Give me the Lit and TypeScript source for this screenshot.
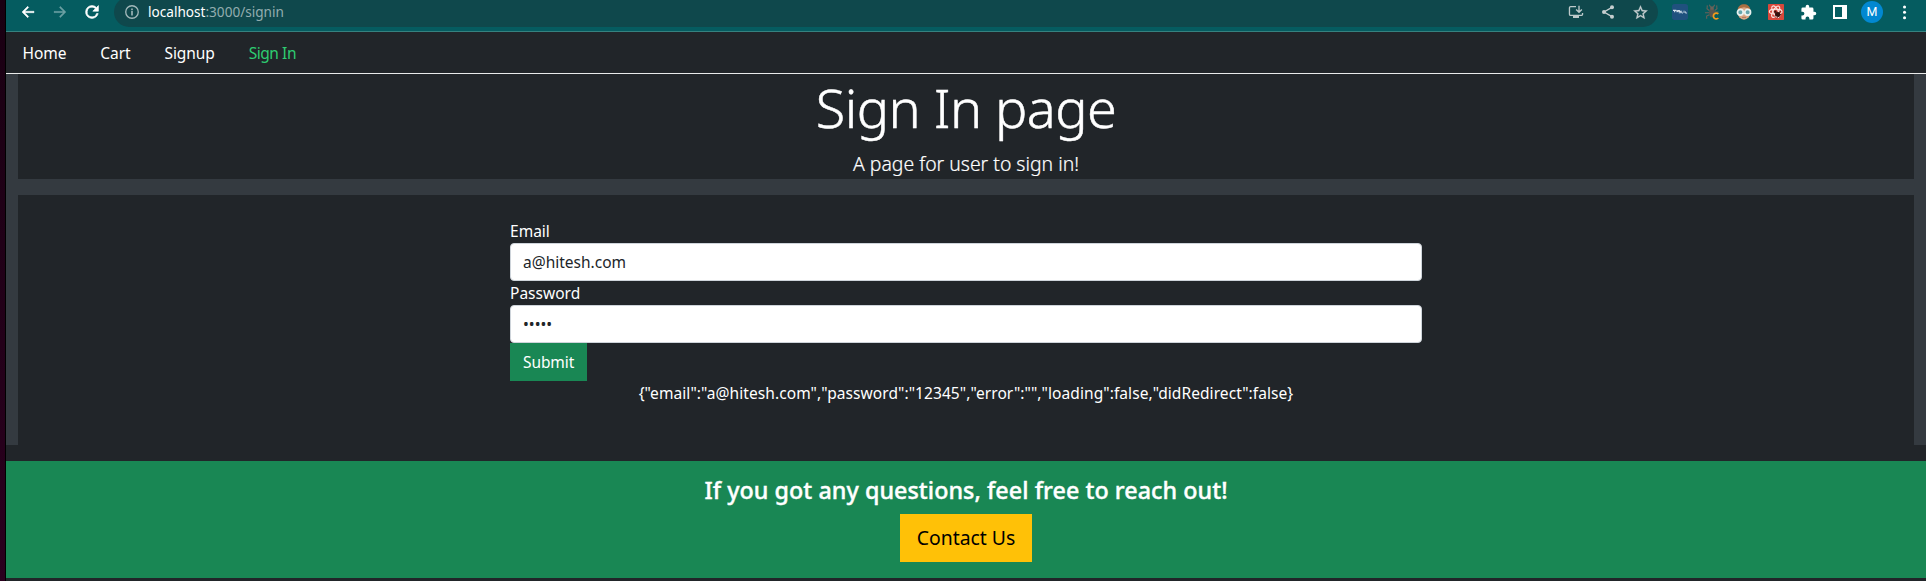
import { LitElement, html, css, svg } from "lit";
import { customElement, property, state } from "lit/decorators.js";
import { classMap } from "lit/directives/class-map.js";

const icons: Record<string, unknown> = {
  back: svg`<path fill="#fff" d="M21 10.900H7.300l5.700-5.700L11.500 3.500 3 12l8.500 8.500 1.500-1.700-5.700-5.700H21z" stroke="#fff" stroke-width=".7"/>`,
  forward: svg`<path fill="#6b9fa2" d="M3 10.900h13.700L11 5.200l1.500-1.700L21 12l-8.500 8.500-1.500-1.700 5.700-5.700H3z" stroke="#6b9fa2" stroke-width=".4"/>`,
  reload: svg`<path fill="#fff" stroke="#fff" stroke-width=".8" transform="translate(-2.400 -2.400) scale(1.200)" d="M17.650 6.350A7.960 7.960 0 0 0 12 4a8 8 0 1 0 7.730 10h-2.080A6 6 0 1 1 12 6c1.660 0 3.140.690 4.220 1.780L13 11h7V4z"/>`,
  info: svg`<circle cx="12" cy="12" r="9.400" fill="none" stroke="#a3b9bb" stroke-width="2"/><path fill="#a3b9bb" d="M10.800 10.600h2.400v6.600h-2.400zM10.800 6.800h2.400v2.400h-2.400z"/>`,
  install: svg`<path fill="none" stroke="#bdc9ca" stroke-width="2" d="M12 4H4a1.800 1.800 0 0 0-1.800 1.800v9.400A1.800 1.800 0 0 0 4 17h16a1.800 1.800 0 0 0 1.800-1.800V13.500M16.500 2.500V12M12.200 8.200l4.300 4.300 4.300-4.300"/><path fill="#bdc9ca" d="M7.500 17h9v4h-9z"/>`,
  share: svg`<path fill="none" stroke="#c6cecf" stroke-width="2" d="M18 5 6 12l12 7"/><g fill="#c6cecf"><circle cx="18" cy="5" r="3"/><circle cx="6" cy="12" r="3"/><circle cx="18" cy="19" r="3"/></g>`,
  star: svg`<path fill="#c6cecf" stroke="#c6cecf" stroke-width=".4" d="M22 9.240l-7.190-.620L12 2 9.190 8.630 2 9.240l5.460 4.730L5.820 21 12 17.270 18.180 21l-1.630-7.030zM12 15.400l-3.760 2.270 1-4.280-3.320-2.880 4.380-.380L12 6.100l1.710 4.040 4.380.380-3.320 2.880 1 4.280z"/>`,
  tag: svg`<rect width="24" height="24" rx="4" fill="#20517e"/><path fill="none" stroke="#d7e2eb" stroke-width="1.700" d="M1.500 9.500h5M4 9.500v3M7.500 9.500v3M9 12v-2.200h2V12M12.500 10v3"/><path fill="none" stroke="#bacddc" stroke-width="1.500" d="M10 13.200h3M14.500 10v3.500h2M18 10v3.500M20 11v2.500h2.500"/>`,
  bug: svg`<g fill="none" stroke="#6a6259" stroke-width="1.600"><path d="M8 10 4.500 7 5 2M16 10l3.500-3L19 2M8 13H1.500M16 12h6M8 16l-4 2v4M10 5 8 1M14 5l2-4"/></g><ellipse cx="12" cy="13" rx="4.300" ry="7" fill="#575550"/><circle cx="12" cy="6" r="2.800" fill="#6a6259"/><path fill="none" stroke="#f29a1c" stroke-width="2.600" d="M21.500 15a4.300 4.300 0 1 0 0 6"/>`,
  face: svg`<ellipse cx="12" cy="12.500" rx="9.700" ry="11" fill="#dba886"/><path fill="#a96e42" d="M2.400 9C3 3.500 7 .5 12 .5s9 3 9.600 8.500L18 6.500 12 5 6 6.500z"/><path d="M10 12h4" stroke="#e8f1ef" stroke-width="2"/><circle cx="6.500" cy="12.500" r="4.300" fill="#64a5ad" stroke="#e8f1ef" stroke-width="2.600"/><circle cx="17.500" cy="12.500" r="4.300" fill="#64a5ad" stroke="#e8f1ef" stroke-width="2.600"/><path d="M9 20h6" stroke="#a96e5a" stroke-width="1.300"/>`,
  atom: svg`<rect width="24" height="24" rx="1" fill="#d9483b"/><g fill="none" stroke="#f8e4e0" stroke-width="1.700"><ellipse cx="11.500" cy="11.500" rx="9.500" ry="3.900"/><ellipse cx="11.500" cy="11.500" rx="9.500" ry="3.900" transform="rotate(60 11.500 11.500)"/><ellipse cx="11.500" cy="11.500" rx="9.500" ry="3.900" transform="rotate(120 11.500 11.500)"/></g><ellipse cx="14.500" cy="15.500" rx="4" ry="3.500" fill="#35110e"/><circle cx="11" cy="11.500" r="1.800" fill="#35110e"/><path stroke="#35110e" stroke-width="1.200" d="m10 19 9-8M13 21l7-6M11 14l7 6"/>`,
  puzzle: svg`<path fill="#fff" d="M20.500 11H19V7a2 2 0 0 0-2-2h-4V3.500a2.500 2.500 0 0 0-5 0V5H4a2 2 0 0 0-1.990 2v3.800H3.500a2.700 2.700 0 0 1 0 5.400H2V20a2 2 0 0 0 2 2h3.800v-1.500a2.700 2.700 0 0 1 5.400 0V22H17a2 2 0 0 0 2-2v-4h1.500a2.500 2.500 0 0 0 0-5z"/>`,
  panel: svg`<path fill="#fff" fill-rule="evenodd" d="M1.500 1.500h21v21h-21zM4.500 4.500v15H15v-15z"/>`,
  more: svg`<g fill="#fff"><circle cx="12.800" cy="4.500" r="2.300"/><circle cx="12.800" cy="12.500" r="2.300"/><circle cx="12.800" cy="20.500" r="2.300"/></g>`,
};

@customElement("tool-icon")
class ToolIcon extends LitElement {
  static styles = css`
    :host { display: flex; flex: none; width: 32px; height: 24px; align-items: center; justify-content: center; }
    .glyph { display: block; width: 16px; height: 16px; }
    .wide { width: 17px; height: 17px; }
  `;
  @property() name = "";
  render() {
    const wide = ["star", "puzzle"].includes(this.name);
    return html`<svg class=${classMap({ glyph: true, wide })} viewBox="0 0 24 24">${icons[this.name]}</svg>`;
  }
}

@customElement("browser-bar")
class BrowserBar extends LitElement {
  static styles = css`
    :host { display: flex; box-sizing: border-box; height: 32px; padding: 0 6px 7px; align-items: center;
      overflow: hidden; background: #055c60; border-bottom: 1px solid #36827f; }
    .address { display: flex; flex: 1; height: 30px; margin: 0 6px; padding: 0 2px; align-items: center;
      border-radius: 15px; background: #0f484c; }
    .url { flex: 1; font-size: 13.600px; line-height: 20px; color: #93adaf; }
    .host { color: #fff; }
    .slot { display: flex; width: 32px; justify-content: center; }
    .avatar { width: 22px; height: 22px; border-radius: 50%; background: #0288d1; color: #fff;
      font: 12.500px/22px Roboto, sans-serif; text-align: center; }
  `;
  render() {
    const icon = (n: string) => html`<tool-icon name=${n}></tool-icon>`;
    return html`
      ${["back", "forward", "reload"].map(icon)}
      <div class="address">
        ${icon("info")}
        <span class="url"><span class="host">localhost</span>:3000/signin</span>
        ${["install", "share", "star"].map(icon)}
      </div>
      ${["tag", "bug", "face", "atom", "puzzle", "panel"].map(icon)}
      <span class="slot"><span class="avatar">M</span></span>
      ${icon("more")}`;
  }
}

@customElement("sign-in-form")
class SignInForm extends LitElement {
  static styles = css`
    :host { display: block; padding: 24px 0; background: #212529; }
    .form { display: flex; flex-direction: column; align-items: flex-start; width: 912px; margin: 0 auto; }
    .label { line-height: 24px; }
    .control { box-sizing: border-box; width: 100%; height: 38px; padding: 6px 12px; border: 1px solid #ced4da;
      border-radius: 4px; background: #fff; color: #212529; font: inherit; line-height: 24px; }
    .submit { height: 38px; padding: 0 13px; border: 0; background: #198754; color: #fff; font: inherit;
      letter-spacing: -.1px; }
    .dump { margin: 0 0 16px; text-align: center; letter-spacing: .07px; }
  `;
  @state() values = { email: "a@hitesh.com", password: "12345", error: "", loading: false, didRedirect: false };
  render() {
    return html`
      <form class="form" @submit=${(e: Event) => e.preventDefault()}>
        <label class="label" for="email">Email</label>
        <input class="control" id="email" type="email" .value=${this.values.email}
          @input=${(e: any) => (this.values = { ...this.values, email: e.target.value })} />
        <label class="label" for="password">Password</label>
        <input class="control" id="password" type="password" .value=${this.values.password}
          @input=${(e: any) => (this.values = { ...this.values, password: e.target.value })} />
        <button class="submit">Submit</button>
      </form>
      <p class="dump">${JSON.stringify(this.values)}</p>`;
  }
}

@customElement("app-root")
class AppRoot extends LitElement {
  static styles = css`
    :host { display: flex; height: 581px; overflow: hidden; color: #fff; background: #212529;
      font: 15.520px/24px "Noto Sans", "Open Sans", sans-serif; }
    .edge { box-sizing: border-box; width: 6px; border-right: 1px solid #000;
      background: linear-gradient(#190012, #2a001e); }
    .window { flex: 1; min-width: 0; }
    .nav { display: flex; box-sizing: border-box; height: 42px; padding-left: .6px; gap: 2px;
      border-bottom: 1px solid #e9eaea; }
    .link { padding: 9px 16px 7px; color: #fff; text-decoration: none; letter-spacing: -.1px; }
    .active { color: #2ecc71; letter-spacing: -.45px; }
    .page { padding: 0 12px; background: #343a40; }
    .hero { margin-bottom: 16px; height: 105px; text-align: center; background: #212529; }
    .title { margin: 0 0 8px; font-size: 54px; line-height: 67.200px; font-weight: 300; letter-spacing: -.55px;
      -webkit-text-stroke: .5px #fff; }
    .lead { margin: 0; font-size: 19.400px; line-height: 30px; font-weight: 300; -webkit-text-stroke: .2px #fff; }
    .footer { box-sizing: border-box; height: 117px; margin-top: 16px; padding: 15px 0 16px; display: flex;
      flex-direction: column; align-items: center; background: #198754; }
    .question { margin: 0 0 9px; font-size: 23.300px; line-height: 29px; font-weight: 500; letter-spacing: .05px;
      -webkit-text-stroke: .4px #fff; }
    .contact { width: 132px; height: 48px; padding: 0; border: 0; background: #ffc107; color: #000;
      font: 19.400px/30px "Noto Sans", sans-serif; }
  `;
  render() {
    return html`
      <div class="edge"></div>
      <div class="window">
        <browser-bar></browser-bar>
        <nav class="nav">
          ${["Home", "Cart", "Signup", "Sign In"].map(
            (t) => html`<a class=${classMap({ link: true, active: t === "Sign In" })}>${t}</a>`)}
        </nav>
        <main class="page">
          <header class="hero">
            <h1 class="title">Sign In page</h1>
            <p class="lead">A page for user to sign in!</p>
          </header>
          <sign-in-form></sign-in-form>
        </main>
        <footer class="footer">
          <h4 class="question">If you got any questions, feel free to reach out!</h4>
          <button class="contact">Contact Us</button>
        </footer>
      </div>`;
  }
}
